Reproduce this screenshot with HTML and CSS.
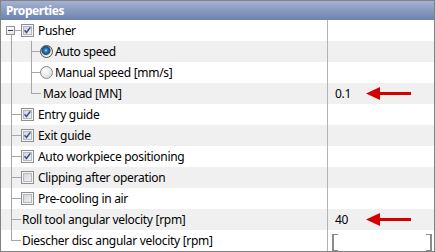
FILE: index.html
```html
<!DOCTYPE html>
<html lang="en">

<head>
    <meta charset="UTF-8">
    <meta name="viewport" content="width=device-width, initial-scale=1.0">
    <title>Properties</title>
    <link rel="stylesheet" href="styles.css">
</head>

<body>
    <div class="panel">
        <div class="header">Properties</div>

        <div class="row">
            <div class="name">
                <span class="unit node"><span class="expander"></span></span>
                <span class="check on"><svg viewBox="0 0 13 13"><path d="M3 6.2 L5.3 8.8 L9.8 2.8" /></svg></span>
                <span class="label">Pusher</span>
            </div>
            <div class="value"></div>
        </div>

        <div class="row alt">
            <div class="name">
                <span class="unit pipe"></span><span class="unit tee"></span>
                <span class="radio on"></span>
                <span class="label">Auto speed</span>
            </div>
            <div class="value"></div>
        </div>

        <div class="row">
            <div class="name">
                <span class="unit pipe"></span><span class="unit tee"></span>
                <span class="radio"></span>
                <span class="label">Manual speed [mm/s]</span>
            </div>
            <div class="value"></div>
        </div>

        <div class="row alt">
            <div class="name">
                <span class="unit pipe"></span><span class="unit elbow"></span>
                <span class="label plain">Max load [MN]</span>
            </div>
            <div class="value">
                <span>0.1</span>
                <svg class="arrow" viewBox="0 0 45 13"><path d="M0 6.5 L14 0 L14 5 L45 5 L45 8 L14 8 L14 13 Z" /></svg>
            </div>
        </div>

        <div class="row">
            <div class="name">
                <span class="unit tee"></span>
                <span class="check on"><svg viewBox="0 0 13 13"><path d="M3 6.2 L5.3 8.8 L9.8 2.8" /></svg></span>
                <span class="label">Entry guide</span>
            </div>
            <div class="value"></div>
        </div>

        <div class="row alt">
            <div class="name">
                <span class="unit tee"></span>
                <span class="check on"><svg viewBox="0 0 13 13"><path d="M3 6.2 L5.3 8.8 L9.8 2.8" /></svg></span>
                <span class="label">Exit guide</span>
            </div>
            <div class="value"></div>
        </div>

        <div class="row">
            <div class="name">
                <span class="unit tee"></span>
                <span class="check on"><svg viewBox="0 0 13 13"><path d="M3 6.2 L5.3 8.8 L9.8 2.8" /></svg></span>
                <span class="label">Auto workpiece positioning</span>
            </div>
            <div class="value"></div>
        </div>

        <div class="row alt">
            <div class="name">
                <span class="unit tee"></span>
                <span class="check"></span>
                <span class="label">Clipping after operation</span>
            </div>
            <div class="value"></div>
        </div>

        <div class="row">
            <div class="name">
                <span class="unit tee"></span>
                <span class="check"></span>
                <span class="label">Pre-cooling in air</span>
            </div>
            <div class="value"></div>
        </div>

        <div class="row alt">
            <div class="name">
                <span class="unit tee"></span>
                <span class="label plain">Roll tool angular velocity [rpm]</span>
            </div>
            <div class="value">
                <span>40</span>
                <svg class="arrow" viewBox="0 0 45 13"><path d="M0 6.5 L14 0 L14 5 L45 5 L45 8 L14 8 L14 13 Z" /></svg>
            </div>
        </div>

        <div class="row">
            <div class="name">
                <span class="unit elbow"></span>
                <span class="label plain">Diescher disc angular velocity [rpm]</span>
            </div>
            <div class="value">
                <span class="bracket"></span>
            </div>
        </div>
    </div>
</body>

</html>
```

FILE: styles.css
```css
* {
    box-sizing: border-box;
}

body {
    margin: 0;
    font-family: 'Noto Sans', 'Open Sans', sans-serif;
    font-size: 12px;
    letter-spacing: -0.3px;
    color: #000;
}

.panel {
    width: 435px;
    height: 252px;
    border: 1px solid #828282;
    background-color: #fff;
    overflow: hidden;
}

.header {
    height: 19px;
    line-height: 19px;
    padding-left: 5px;
    font-weight: bold;
    letter-spacing: -0.4px;
    color: #fff;
    background-image: linear-gradient(#a4b2d2, #6d82ae);
}

.row {
    display: flex;
    height: 21px;
    background-color: #fff;
}

.row.alt {
    background-color: #f0f0f0;
}

.name {
    width: 326px;
    display: flex;
    align-items: center;
    height: 100%;
}

.value {
    flex: 1;
    display: flex;
    align-items: center;
    border-left: 1px solid #b4b4b4;
    padding-left: 7px;
}

/* tree lines */
.unit {
    width: 20px;
    height: 100%;
    flex: none;
    background-repeat: no-repeat;
}

.pipe {
    background-image: linear-gradient(#a6a6a6, #a6a6a6);
    background-position: 10px 0;
    background-size: 1px 100%;
}

.tee {
    background-image: linear-gradient(#a6a6a6, #a6a6a6), linear-gradient(#a6a6a6, #a6a6a6);
    background-position: 10px 0, 10px 10px;
    background-size: 1px 100%, 10px 1px;
}

.elbow {
    background-image: linear-gradient(#a6a6a6, #a6a6a6), linear-gradient(#a6a6a6, #a6a6a6);
    background-position: 10px 0, 10px 10px;
    background-size: 1px 11px, 10px 1px;
}

.node {
    display: flex;
    align-items: center;
    padding-left: 5px;
    background-image: linear-gradient(#a6a6a6, #a6a6a6), linear-gradient(#a6a6a6, #a6a6a6);
    background-position: 10px 15px, 14px 10px;
    background-size: 1px 6px, 6px 1px;
}

.expander {
    position: relative;
    width: 9px;
    height: 9px;
    border: 1px solid #919191;
    background-image: linear-gradient(#ffffff, #e2e4ea);
}

.expander::after {
    content: '';
    position: absolute;
    left: 1px;
    top: 3px;
    width: 5px;
    height: 1px;
    background-color: #27386e;
}

/* checkbox */
.check {
    width: 13px;
    height: 13px;
    flex: none;
    border: 1px solid #8e8f8f;
    background-image: linear-gradient(135deg, #cdd0d5, #f7f7f7);
    box-shadow: inset 0 0 0 1px #f6f6f6, inset 0 0 0 2px #b5b9be;
}

.check svg {
    display: block;
    width: 11px;
    height: 11px;
}

.check path {
    fill: none;
    stroke: #3f5392;
    stroke-width: 1.9;
}

/* radio */
.radio {
    width: 13px;
    height: 13px;
    flex: none;
    margin-left: -1px;
    border-radius: 50%;
    border: 1px solid #8b8b8b;
    background-image: radial-gradient(circle at 40% 35%, #ffffff, #d2d2d2);
}

.radio.on {
    border-color: #4d4d4d;
    background-image: radial-gradient(circle at 45% 40%, #8fd4ff 0, #2a8ad6 1.5px, #11508f 3.5px, #5a5a5a 4.2px, #d9d9d9 5px, #f2f2f2 6px);
}

.label {
    padding-left: 4px;
    white-space: nowrap;
}

.radio + .label {
    padding-left: 2px;
}

.label.plain {
    padding-left: 1px;
}

.pipe + .elbow + .label.plain {
    padding-left: 2px;
}

/* value column */
.arrow {
    width: 45px;
    height: 13px;
    margin-left: auto;
    margin-right: 23px;
    fill: #d40000;
}

.bracket {
    width: 100px;
    height: 15px;
    margin-left: -3px;
    margin-top: 1px;
    display: flex;
    justify-content: space-between;
}

.bracket::before,
.bracket::after {
    content: '';
    width: 4px;
    height: 100%;
    border: 2px solid #8a8a8a;
    border-top-width: 1px;
    border-bottom-width: 1px;
}

.bracket::before {
    border-right: 0;
}

.bracket::after {
    border-left: 0;
}
```
